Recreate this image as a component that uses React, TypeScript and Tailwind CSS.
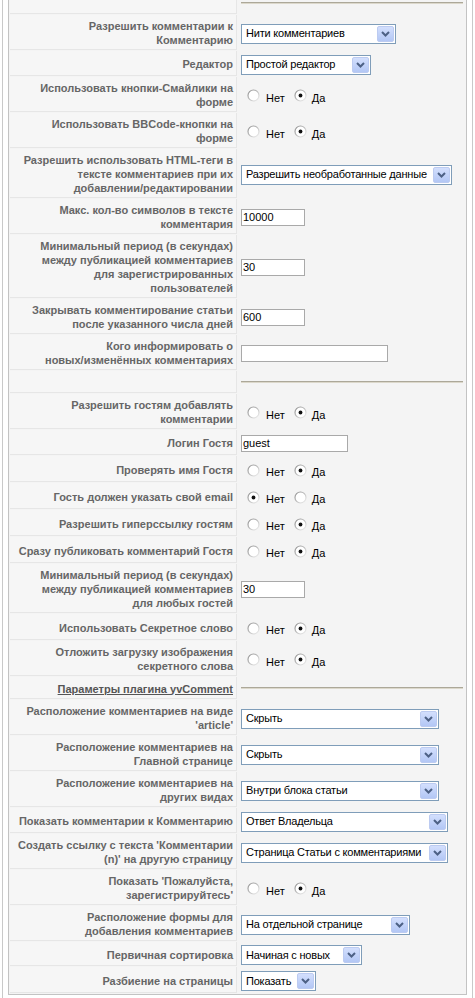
import React from 'react';

type Value =
  | { k: 'select'; text: string; w: string }
  | { k: 'input'; text: string; w: string }
  | { k: 'radio'; yes: boolean }
  | { k: 'hr'; top?: boolean };

interface Row {
  lines: string[];
  h: string;
  v: Value;
  heading?: boolean;
}

const rows: Row[] = [
  { lines: [], h: 'h-[14px]', v: { k: 'hr', top: true } },
  { lines: ['Разрешить комментарии к', 'Комментарию'], h: 'h-[35px]', v: { k: 'select', text: 'Нити комментариев', w: 'w-[155px]' } },
  { lines: ['Редактор'], h: 'h-[25px]', v: { k: 'select', text: 'Простой редактор', w: 'w-[130px]' } },
  { lines: ['Использовать кнопки-Смайлики на', 'форме'], h: 'h-[35px]', v: { k: 'radio', yes: true } },
  { lines: ['Использовать BBCode-кнопки на', 'форме'], h: 'h-[35px]', v: { k: 'radio', yes: true } },
  { lines: ['Разрешить использовать HTML-теги в', 'тексте комментариев при их', 'добавлении/редактировании'], h: 'h-[49px]', v: { k: 'select', text: 'Разрешить необработанные данные', w: 'w-[211px]' } },
  { lines: ['Макс. кол-во символов в тексте', 'комментария'], h: 'h-[35px]', v: { k: 'input', text: '10000', w: 'w-[64px]' } },
  { lines: ['Минимальный период (в секундах)', 'между публикацией комментариев', 'для зарегистрированных', 'пользователей'], h: 'h-[63px]', v: { k: 'input', text: '30', w: 'w-[64px]' } },
  { lines: ['Закрывать комментирование статьи', 'после указанного числа дней'], h: 'h-[35px]', v: { k: 'input', text: '600', w: 'w-[64px]' } },
  { lines: ['Кого информировать о', 'новых/изменённых комментариях'], h: 'h-[35px]', v: { k: 'input', text: '', w: 'w-[147px]' } },
  { lines: [], h: 'h-[22px]', v: { k: 'hr' } },
  { lines: ['Разрешить гостям добавлять', 'комментарии'], h: 'h-[35px]', v: { k: 'radio', yes: true } },
  { lines: ['Логин Гостя'], h: 'h-[25px]', v: { k: 'input', text: 'guest', w: 'w-[107px]' } },
  { lines: ['Проверять имя Гостя'], h: 'h-[26px]', v: { k: 'radio', yes: true } },
  { lines: ['Гость должен указать свой email'], h: 'h-[26px]', v: { k: 'radio', yes: false } },
  { lines: ['Разрешить гиперссылку гостям'], h: 'h-[26px]', v: { k: 'radio', yes: true } },
  { lines: ['Сразу публиковать комментарий Гостя'], h: 'h-[26px]', v: { k: 'radio', yes: true } },
  { lines: ['Минимальный период (в секундах)', 'между публикацией комментариев', 'для любых гостей'], h: 'h-[49px]', v: { k: 'input', text: '30', w: 'w-[64px]' } },
  { lines: ['Использовать Секретное слово'], h: 'h-[26px]', v: { k: 'radio', yes: true } },
  { lines: ['Отложить загрузку изображения', 'секретного слова'], h: 'h-[35px]', v: { k: 'radio', yes: true } },
  { lines: ['Параметры плагина yvComment'], h: 'h-[22px]', v: { k: 'hr' }, heading: true },
  { lines: ['Расположение комментариев на виде', "'article'"], h: 'h-[35px]', v: { k: 'select', text: 'Скрыть', w: 'w-[198px]' } },
  { lines: ['Расположение комментариев на', 'Главной странице'], h: 'h-[35px]', v: { k: 'select', text: 'Скрыть', w: 'w-[198px]' } },
  { lines: ['Расположение комментариев на', 'других видах'], h: 'h-[35px]', v: { k: 'select', text: 'Внутри блока статьи', w: 'w-[198px]' } },
  { lines: ['Показать комментарии к Комментарию'], h: 'h-[25px]', v: { k: 'select', text: 'Ответ Владельца', w: 'w-[207px]' } },
  { lines: ["Создать ссылку с текста 'Комментарии", "(n)' на другую страницу"], h: 'h-[35px]', v: { k: 'select', text: 'Страница Статьи с комментариями', w: 'w-[207px]' } },
  { lines: ["Показать 'Пожалуйста,", "зарегистрируйтесь'"], h: 'h-[35px]', v: { k: 'radio', yes: true } },
  { lines: ['Расположение формы для', 'добавления комментариев'], h: 'h-[35px]', v: { k: 'select', text: 'На отдельной странице', w: 'w-[169px]' } },
  { lines: ['Первичная сортировка'], h: 'h-[24px]', v: { k: 'select', text: 'Начиная с новых', w: 'w-[121px]' } },
  { lines: ['Разбиение на страницы'], h: 'h-[26px]', v: { k: 'select', text: 'Показать', w: 'w-[75px]' } },
];

function Select({ text, w }: { text: string; w: string }) {
  return (
    <div className={`${w} h-[20px] flex items-center border border-[#7f9db9] bg-white`}>
      <span className="pl-[4px] pr-[3px] text-[11px] leading-none tracking-[-0.2px] text-black whitespace-nowrap overflow-hidden">
        {text}
      </span>
      {/* xp style drop button */}
      <span className="ml-auto mr-px h-[16px] w-[17px] shrink-0 flex items-center justify-center rounded-[2px] border border-[#bccbf1] bg-gradient-to-b from-[#d3dffd] to-[#b3c7f5]">
        <svg width="9" height="6" viewBox="0 0 9 6">
          <path d="M1 1 L4.5 4.5 L8 1" fill="none" stroke="#4d6185" strokeWidth="2" />
        </svg>
      </span>
    </div>
  );
}

function Radio({ on }: { on: boolean }) {
  return (
    <svg width="13" height="13" viewBox="0 0 13 13" className="shrink-0">
      <defs>
        <linearGradient id="rb" x1="0" y1="0" x2="1" y2="1">
          <stop offset="0" stopColor="#8d8d8d" />
          <stop offset="0.55" stopColor="#c4c4c4" />
          <stop offset="1" stopColor="#f2f2f2" />
        </linearGradient>
      </defs>
      <circle cx="6.5" cy="6.5" r="5.5" fill="#fff" stroke="url(#rb)" strokeWidth="1.2" />
      {on && <circle cx="6.5" cy="6.5" r="1.9" fill="#111" />}
    </svg>
  );
}

function RadioPair({ yes }: { yes: boolean }) {
  return (
    <div className="flex items-center pl-[6px] text-[11px] text-black">
      <Radio on={!yes} />
      <span className="ml-[6px] mt-[5px] leading-none">Нет</span>
      <span className="ml-[9px]">
        <Radio on={yes} />
      </span>
      <span className="ml-[5px] mt-[5px] leading-none">Да</span>
    </div>
  );
}

function Rule() {
  return (
    <div className="w-[222px]">
      <div className="h-px bg-[#aca899]" />
      <div className="h-px bg-[#dcd8cb]" />
    </div>
  );
}

function ValueCell({ v }: { v: Value }) {
  switch (v.k) {
    case 'select':
      return <Select text={v.text} w={v.w} />;
    case 'input':
      return (
        <div className={`${v.w} h-[17px] flex items-center border border-[#a9a9a9] bg-white pl-px text-[11px] leading-none text-black`}>
          {v.text}
        </div>
      );
    case 'radio':
      return <RadioPair yes={v.yes} />;
    case 'hr':
      return <Rule />;
  }
}

function isTopRule(v: Value) {
  return v.k === 'hr' && !!v.top;
}

export default function App() {
  return (
    <div className="h-[998px] bg-white" style={{ fontFamily: '"Liberation Sans", Arial, sans-serif' }}>
      <div className="ml-[2px] w-[471px] h-[998px] border-x border-[#c9c9c9] px-[5px]">
        <div className="border-x border-b border-[#c3c3c3] bg-[#f4f4f4] px-px pb-px flex flex-col gap-px">
          {rows.map((r, i) => (
            <div key={i} className={`flex gap-px ${r.h}`}>
              <div className="w-[227px] shrink-0 bg-[#f6f6f6] border-b border-r border-[#e6e6e6] pr-[3px] pt-[2px] flex flex-col justify-center items-end text-right text-[11px] leading-[14px] font-bold text-[#666]">
                {r.lines.map((l, j) =>
                  r.heading ? (
                    <span key={j} className="underline text-[#555] whitespace-nowrap">{l}</span>
                  ) : (
                    <span key={j} className="whitespace-nowrap">{l}</span>
                  ),
                )}
              </div>
              <div
                className={`flex-1 flex pl-[3px] ${
                  isTopRule(r.v) ? 'items-start pt-[2px]' : r.v.k === 'hr' ? 'items-center' : 'items-center pt-[2px]'
                }`}
              >
                <ValueCell v={r.v} />
              </div>
            </div>
          ))}
        </div>
      </div>
    </div>
  );
}
